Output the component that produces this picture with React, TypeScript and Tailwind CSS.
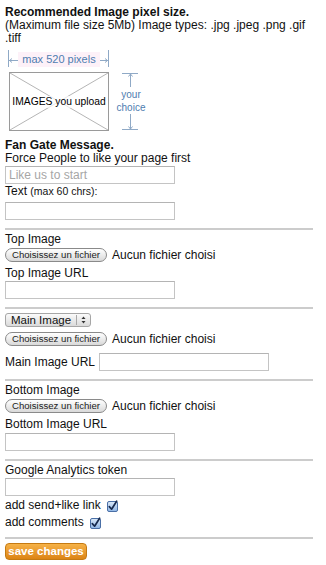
import React from "react";

function TextInput({ placeholder, className = "" }: { placeholder?: string; className?: string }) {
  return (
    <input
      type="text"
      placeholder={placeholder}
      className={
        "block w-[170px] h-[18px] border border-[#c4c4c4] border-t-[#b4b4b4] bg-white px-[3px] text-[12px] leading-[16px] text-[#111] placeholder:text-[#a6a6a6] outline-none " +
        className
      }
    />
  );
}

function FileRow({ className = "" }: { className?: string }) {
  return (
    <div className={"flex items-center h-[14px] " + className}>
      <span className="flex h-[14px] w-[102px] items-center justify-center rounded-[7px] border border-[#8a8a8a] bg-linear-to-b from-white to-[#d9d9d9] text-[9.6px] leading-[12px] text-[#222]">
        Choisissez un fichier
      </span>
      <span className="ml-[5px] text-[12px] leading-[13px]">Aucun fichier choisi</span>
    </div>
  );
}

function Rule({ className = "" }: { className?: string }) {
  return <div className={"h-[2px] w-[308px] bg-[#cccccc] " + className} />;
}

function Check() {
  return (
    <svg width="11" height="12" viewBox="0 0 11 12" className="ml-[6px] shrink-0">
      <defs>
        <linearGradient id="cbg" x1="0" y1="0" x2="0" y2="1">
          <stop offset="0" stopColor="#dbe9f8" />
          <stop offset="1" stopColor="#8fb6e6" />
        </linearGradient>
      </defs>
      <rect x="0.5" y="1.5" width="10" height="10" rx="1.5" fill="url(#cbg)" stroke="#4a6fa6" />
      <path d="M2.3 6.6 L4.6 9.2 L9.6 1.2" stroke="#16294d" strokeWidth="1.7" fill="none" strokeLinecap="round" strokeLinejoin="round" />
    </svg>
  );
}

export default function App() {
  return (
    <div className="bg-white min-h-[565px] pl-[5px] pt-[6px] font-['Liberation_Sans',Arial,sans-serif] text-[12px] leading-[13px] text-[#111]">
      <div className="w-[308px]">
        <p className="font-bold">Recommended Image pixel size.</p>
        <p>
          (Maximum file size 5Mb) Image types: .jpg .jpeg .png .gif
          <br />
          .tiff
        </p>

        {/* diagram */}
        <div className="mt-[5px] ml-[3px] flex">
          <div className="flex w-[101px] flex-col">
            <div className="flex h-[17px] items-end">
              <svg width="10" height="17" viewBox="0 0 10 17" className="shrink-0">
                <line x1="0.5" y1="0" x2="0.5" y2="17" stroke="#8fa9c6" />
                <line x1="1" y1="10.5" x2="10" y2="10.5" stroke="#8fa9c6" />
                <path d="M4 8.5 L1.5 10.5 L4 12.5" stroke="#8fa9c6" fill="none" />
              </svg>
              <span className="flex h-[15px] w-[82px] items-center justify-center bg-[#fdf1f8] text-[11px] leading-[15px] text-[#4f7db0]">
                max 520 pixels
              </span>
              <svg width="9" height="17" viewBox="0 0 9 17" className="shrink-0">
                <line x1="8.5" y1="0" x2="8.5" y2="17" stroke="#8fa9c6" />
                <line x1="0" y1="10.5" x2="8" y2="10.5" stroke="#8fa9c6" />
                <path d="M5 8.5 L7.5 10.5 L5 12.5" stroke="#8fa9c6" fill="none" />
              </svg>
            </div>
            <div className="relative mt-[5px] ml-[1px] flex h-[59px] w-[100px] items-center justify-center border border-[#9a9a9a]">
              <svg className="absolute inset-0" width="98" height="57" viewBox="0 0 98 57">
                <line x1="0" y1="0" x2="98" y2="57" stroke="#b5b5b5" />
                <line x1="98" y1="0" x2="0" y2="57" stroke="#b5b5b5" />
              </svg>
              <span className="relative bg-white/70 text-[10.3px] leading-[12px] text-[#000]">IMAGES you upload</span>
            </div>
          </div>
          <div className="ml-[7px] mt-[22px] flex h-[59px] w-[30px] flex-col items-center">
            <svg width="30" height="16" viewBox="0 0 30 16" className="shrink-0">
              <line x1="6" y1="1.5" x2="22" y2="1.5" stroke="#8fa9c6" />
              <line x1="14.5" y1="2" x2="14.5" y2="15" stroke="#8fa9c6" />
              <path d="M12.5 4.5 L14.5 2 L16.5 4.5" stroke="#8fa9c6" fill="none" />
            </svg>
            <span className="text-center text-[10px] leading-[13px] text-[#4f7db0]">
              your
              <br />
              choice
            </span>
            <svg width="30" height="17" viewBox="0 0 30 17" className="shrink-0">
              <line x1="14.5" y1="0" x2="14.5" y2="15" stroke="#8fa9c6" />
              <line x1="6" y1="15.5" x2="22" y2="15.5" stroke="#8fa9c6" />
              <path d="M12.5 12.5 L14.5 15 L16.5 12.5" stroke="#8fa9c6" fill="none" />
            </svg>
          </div>
        </div>

        <p className="mt-[8px] font-bold">Fan Gate Message.</p>
        <p>Force People to like your page first</p>
        <TextInput placeholder="Like us to start" className="mt-[1px]" />
        <p className="mt-[1px]">
          Text <span className="text-[10.5px]">(max 60 chrs):</span>
        </p>
        <TextInput className="mt-[4px]" />

        <Rule className="mt-[8px]" />
        <p className="mt-[3px]">Top Image</p>
        <FileRow className="mt-[2px]" />
        <p className="mt-[5px]">Top Image URL</p>
        <TextInput className="mt-[1px]" />

        <Rule className="mt-[8px]" />
        <div className="mt-[4px] flex h-[14px] w-[86px] items-center rounded-[3px] border border-[#a6a6a6] bg-linear-to-b from-[#fbfbfb] to-[#dadada] text-[11.5px] leading-[12px] text-[#111]">
          <span className="w-[71px] pl-[5px]">Main Image</span>
          <span className="h-[10px] w-px bg-[#a8a8a8]" />
          <svg width="13" height="12" viewBox="0 0 13 12" className="shrink-0">
            <path d="M4.5 5 L6.5 2.5 L8.5 5 Z" fill="#333" />
            <path d="M4.5 7 L6.5 9.5 L8.5 7 Z" fill="#333" />
          </svg>
        </div>
        <FileRow className="mt-[5px]" />
        <div className="mt-[7px] flex h-[18px] items-center">
          <span>Main Image URL</span>
          <TextInput className="ml-[4px]" />
        </div>

        <Rule className="mt-[8px]" />
        <p className="mt-[3px]">Bottom Image</p>
        <FileRow className="mt-[2px]" />
        <p className="mt-[5px]">Bottom Image URL</p>
        <TextInput className="mt-[2px]" />

        <Rule className="mt-[8px]" />
        <p className="mt-[3px]">Google Analytics token</p>
        <TextInput className="mt-[1px]" />
        <div className="mt-[3px] flex h-[13px] items-center">
          <span>add send+like link</span>
          <Check />
        </div>
        <div className="mt-[4px] flex h-[13px] items-center">
          <span>add comments</span>
          <Check />
        </div>

        <Rule className="mt-[8px]" />
        <button
          type="button"
          className="mt-[4px] flex h-[17px] w-[82px] items-center justify-center rounded-[4px] border border-[#c57a12] bg-linear-to-b from-[#f6b246] to-[#dc8412] text-[11.5px] font-bold leading-[13px] text-white"
        >
          save changes
        </button>
      </div>
    </div>
  );
}
